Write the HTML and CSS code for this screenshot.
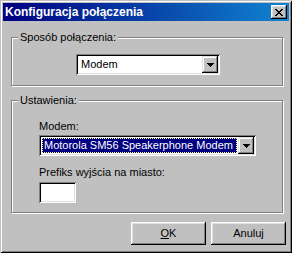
FILE: index.html
```html
<!DOCTYPE html>
<html lang="pl">
<head>
<meta charset="utf-8">
<title>Konfiguracja połączenia</title>
<link rel="stylesheet" href="styles.css">
</head>
<body>
<div class="window">
  <div class="titlebar">
    <span class="title">Konfiguracja połączenia</span>
    <button class="close" aria-label="Zamknij">
      <svg width="8" height="7" viewBox="0 0 8 7" shape-rendering="crispEdges"><path fill="#000" d="M0 0h2v1H0z M6 0h2v1H6z M1 1h2v1H1z M5 1h2v1H5z M2 2h4v1H2z M3 3h2v1H3z M2 4h4v1H2z M1 5h2v1H1z M5 5h2v1H5z M0 6h2v1H0z M6 6h2v1H6z"/></svg>
    </button>
  </div>
  <div class="body">
    <div class="group group-conn">
      <span class="legend">Sposób połączenia:</span>
      <div class="combo combo-type">
        <span class="value">Modem</span>
        <span class="drop"><svg width="7" height="4" viewBox="0 0 7 4" shape-rendering="crispEdges"><path fill="#000" d="M0 0h7v1H0z M1 1h5v1H1z M2 2h3v1H2z M3 3h1v1H3z"/></svg></span>
      </div>
    </div>
    <div class="group group-settings">
      <span class="legend">Ustawienia:</span>
      <div class="label">Modem:</div>
      <div class="combo combo-modem">
        <span class="value selected">Motorola SM56 Speakerphone Modem</span>
        <span class="drop"><svg width="7" height="4" viewBox="0 0 7 4" shape-rendering="crispEdges"><path fill="#000" d="M0 0h7v1H0z M1 1h5v1H1z M2 2h3v1H2z M3 3h1v1H3z"/></svg></span>
      </div>
      <div class="label label-prefix">Prefiks wyjścia na miasto:</div>
      <div class="field"></div>
    </div>
    <div class="buttons">
      <button class="btn"><u>O</u>K</button>
      <button class="btn">Anuluj</button>
    </div>
  </div>
</div>
</body>
</html>
```
FILE: styles.css
```css
* { box-sizing: border-box; }
html, body { margin: 0; padding: 0; }
body {
  background: #c0c0c0;
  font-family: "Liberation Sans", Arial, sans-serif;
  font-size: 11px;
  line-height: 13px;
  color: #000;
}
.window {
  width: 292px;
  height: 253px;
  padding: 3px;
  background: #c0c0c0;
  box-shadow: inset 1px 1px 0 #c0c0c0, inset -1px -1px 0 #000, inset 2px 2px 0 #fff, inset -2px -2px 0 #808080;
  display: flex;
  flex-direction: column;
}
.titlebar {
  height: 18px;
  flex: none;
  display: flex;
  align-items: center;
  justify-content: space-between;
  padding: 0 2px 0 2px;
  background: linear-gradient(90deg, #000080, #1084d0);
  color: #fff;
  font-weight: bold;
  font-size: 12px;
  line-height: 14px;
}
.close {
  width: 16px;
  height: 14px;
  padding: 0;
  border: 0;
  background: #c0c0c0;
  box-shadow: inset -1px -1px 0 #000, inset 1px 1px 0 #fff, inset -2px -2px 0 #808080, inset 2px 2px 0 #dfdfdf;
  display: flex;
  align-items: center;
  justify-content: center;
}
.close svg { display: block; }
.body {
  flex: 1;
  padding: 16px 0 0 8px;
  display: flex;
  flex-direction: column;
}
.group {
  position: relative;
  width: 272px;
  border: 1px solid #808080;
  box-shadow: inset 1px 1px 0 #fff, 1px 1px 0 #fff;
}
.group-conn {
  height: 49px;
  padding: 16px 0 0 64px;
}
.group-settings {
  height: 113px;
  margin-top: 14px;
  padding: 19px 0 0 27px;
}
.legend {
  position: absolute;
  top: -7px;
  left: 6px;
  padding: 0 2px;
  background: #c0c0c0;
  white-space: nowrap;
}
.combo {
  display: flex;
  height: 21px;
  padding: 2px;
  background: #fff;
  box-shadow: inset 1px 1px 0 #808080, inset -1px -1px 0 #fff, inset 2px 2px 0 #000, inset -2px -2px 0 #dfdfdf;
}
.combo-type { width: 144px; }
.combo-modem { width: 217px; margin-top: 2px; }
.value {
  flex: 1;
  min-width: 0;
  margin: 1px;
  border: 1px solid transparent;
  padding-left: 1px;
  display: flex;
  align-items: center;
  white-space: nowrap;
  overflow: hidden;
}
.value.selected {
  background: #000080;
  color: #fff;
  border: 1px dotted #ffff80;
}
.drop {
  width: 16px;
  height: 17px;
  flex: none;
  background: #c0c0c0;
  box-shadow: inset -1px -1px 0 #000, inset 1px 1px 0 #dfdfdf, inset -2px -2px 0 #808080, inset 2px 2px 0 #fff;
  display: flex;
  align-items: center;
  justify-content: center;
}
.drop svg { display: block; }
.label-prefix { margin-top: 10px; }
.field {
  width: 37px;
  height: 21px;
  margin-top: 3px;
  background: #fff;
  box-shadow: inset 1px 1px 0 #808080, inset -1px -1px 0 #fff, inset 2px 2px 0 #000, inset -2px -2px 0 #dfdfdf;
}
.buttons {
  display: flex;
  justify-content: flex-end;
  gap: 5px;
  margin-top: 9px;
  padding-right: 3px;
}
.btn {
  width: 75px;
  height: 23px;
  padding: 0;
  border: 0;
  background: #c0c0c0;
  font: inherit;
  color: #000;
  box-shadow: inset -1px -1px 0 #000, inset 1px 1px 0 #fff, inset -2px -2px 0 #808080, inset 2px 2px 0 #dfdfdf;
}
```
